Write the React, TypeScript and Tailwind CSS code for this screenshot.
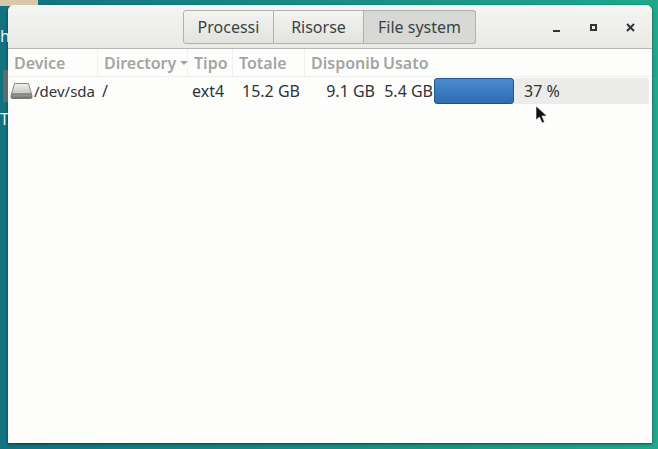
const font = { fontFamily: '"Noto Sans", sans-serif' };

function HardDrive() {
  return (
    <svg width="23" height="18" viewBox="0 0 23 18" className="shrink-0">
      <defs>
        <linearGradient id="top" x1="0" y1="0" x2="0" y2="1">
          <stop offset="0" stopColor="#efefed" />
          <stop offset="1" stopColor="#c6c6c2" />
        </linearGradient>
        <linearGradient id="front" x1="0" y1="0" x2="0" y2="1">
          <stop offset="0" stopColor="#a5a5a1" />
          <stop offset="1" stopColor="#6b6b68" />
        </linearGradient>
      </defs>
      <path d="M4.5 1.5 H18.5 L21.5 12 H1.5 Z" fill="url(#top)" stroke="#8a8a84" strokeWidth="1" />
      <rect x="1" y="12" width="21" height="4.5" rx="1.5" fill="url(#front)" stroke="#666" strokeWidth="0.8" />
    </svg>
  );
}

function DesktopBits() {
  return (
    <>
      <div className="absolute left-0 top-0 w-[38px] h-[6px] bg-[#d8c7a8]" />
      <span className="absolute left-0 top-[24px] text-[16px] text-[#e8f2f2]">h</span>
      <div className="absolute left-[3px] top-[70px] w-[5px] h-[32px] bg-[#5b6b6e]" />
      <span className="absolute left-0 top-[107px] text-[16px] text-[#e8f2f2]">T</span>
    </>
  );
}

function Tab({ label, width, active, first }: { label: string; width: string; active?: boolean; first?: boolean }) {
  return (
    <div
      className={`${width} h-[34px] flex items-center justify-center text-[16px] text-[#3a4344] border border-[#b0b2ae] ${
        first ? "rounded-l-[3px]" : "border-l-0"
      } ${
        active
          ? "bg-[#d8d9d6] rounded-r-[3px]"
          : "bg-gradient-to-b from-[#f4f4f2] to-[#e2e2df]"
      }`}
    >
      {label}
    </div>
  );
}

function HeaderCell({ label, width, sorted, plain }: { label: string; width: string; sorted?: boolean; plain?: boolean }) {
  return (
    <div className={`${width} shrink-0 h-full flex items-center pl-[6px] ${plain ? "" : "border-r border-[#f1f1ef]"} text-[16px] font-semibold text-[#a2a5a3] whitespace-nowrap`}>
      <span>{label}</span>
      {sorted && <span className="ml-[4px] w-0 h-0 border-x-[4px] border-x-transparent border-t-[4px] border-t-[#a2a5a3]" />}
    </div>
  );
}

export default function App() {
  return (
    <div
      className="relative w-[658px] h-[449px] overflow-hidden pl-[8px] pt-[5px] bg-gradient-to-r from-[#12727f] to-[#1fa98a]"
      style={font}
    >
      <DesktopBits />
      <div className="w-[644px] h-[438px] flex flex-col bg-[#fdfdfc] rounded-t-[6px] shadow-[0_1px_3px_rgba(0,0,0,0.55)]">
        <header className="relative h-[44px] shrink-0 flex items-center pl-[175px] rounded-t-[6px] bg-gradient-to-b from-[#f5f5f3] to-[#e9e9e6] border-b border-[#b6b7b4]">
          <div className="flex">
            <Tab label="Processi" width="w-[91px]" first />
            <Tab label="Risorse" width="w-[90px]" />
            <Tab label="File system" width="w-[112px]" active />
          </div>
          <div className="absolute right-[17px] top-[18px] flex items-center gap-[29px]">
            <span className="w-[8px] h-[8px] flex items-end"><span className="block w-[7px] h-[2px] bg-[#2e3436]" /></span>
            <span className="w-[7px] h-[7px] border-2 border-[#2e3436]" />
            <svg width="9" height="9" viewBox="0 0 9 9">
              <path d="M1 1 L8 8 M8 1 L1 8" stroke="#2e3436" strokeWidth="2" />
            </svg>
          </div>
        </header>

        <div className="h-[28px] shrink-0 flex items-center border-b border-[#f0f0ee]">
          <HeaderCell label="Device" width="w-[90px]" />
          <HeaderCell label="Directory" width="w-[90px]" sorted />
          <HeaderCell label="Tipo" width="w-[45px]" />
          <HeaderCell label="Totale" width="w-[72px]" />
          <HeaderCell label="Disponib" width="w-[72px]" plain />
          <HeaderCell label="Usato" width="w-[60px]" plain />
        </div>

        <div className="h-[27px] shrink-0 flex items-center text-[16px] text-[#2e3436] whitespace-nowrap">
          <div className="w-[90px] shrink-0 flex items-center pl-[2px] gap-[1px]">
            <HardDrive />
            <span className="text-[15px] pt-[1px]">/dev/sda</span>
          </div>
          <div className="w-[90px] shrink-0 pl-[4px] pt-[1px]">/</div>
          <div className="w-[45px] shrink-0 pl-[4px] pt-[1px]">ext4</div>
          <div className="w-[72px] shrink-0 pl-[9px] pt-[1px]">15.2 GB</div>
          <div className="w-[72px] shrink-0 text-right pr-[2px] pt-[1px]">9.1 GB</div>
          <div className="w-[56px] shrink-0 text-right pt-[1px]">5.4 GB</div>
          <div className="w-[215px] h-[26px] ml-[1px] flex items-center bg-[#ececea] rounded-[2px]">
            <div className="w-[80px] h-full rounded-[3px] border border-[#24548f] bg-gradient-to-b from-[#4a8bd0] to-[#2f6cb2]" />
            <span className="ml-[10px] pt-[1px]">37 %</span>
          </div>
        </div>
      </div>

      <svg width="14" height="20" viewBox="0 0 14 20" className="absolute left-[535px] top-[105px]">
        <path d="M1 1 L1 15 L4.5 12 L7 18 L9.5 17 L7 11 L12 11 Z" fill="#111" stroke="#fff" strokeWidth="0.6" />
      </svg>
    </div>
  );
}
